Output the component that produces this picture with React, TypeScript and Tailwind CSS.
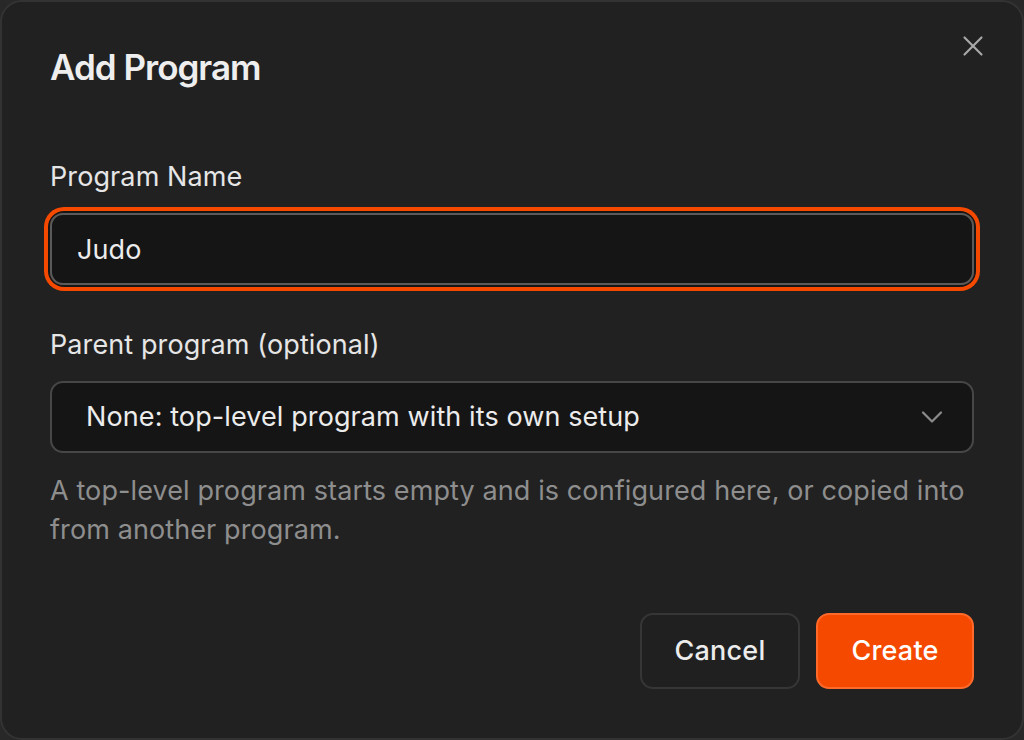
import React, { useState } from 'react';
import { X, ChevronDown } from 'lucide-react';

const App = () => {
  const [name, setName] = useState('Judo');

  return (
    <div className="min-h-screen w-full bg-[#282828]" style={{ fontFamily: 'Inter, "Noto Sans", sans-serif' }}>
      <div className="relative h-[740px] w-[1024px] rounded-[22px] border-2 border-[#333333] bg-[#212121] px-[48px] pt-[41px] text-[#ececec]">
        <button className="absolute right-[32px] top-[27px] text-[#a8a8a8]">
          <X className="h-[34px] w-[34px]" strokeWidth={1.5} />
        </button>

        <h1 className="text-[35px] font-semibold leading-[48px] tracking-[-1px] text-[#eeeeee]">Add Program</h1>

        <div className="mt-[68px]">
          <label className="block text-[27px] leading-[36px] tracking-[0.1px] text-[#e6e6e6]">Program Name</label>
          <div className="mt-[18px] rounded-[14px] shadow-[0_0_0_2px_#161616,0_0_0_6px_#f54900]">
            <input
              value={name}
              onChange={(e) => setName(e.target.value)}
              className="h-[72px] w-full rounded-[13px] border-2 border-[#5a5a5a] bg-[#151515] px-[25px] text-[27px] tracking-[0.1px] text-[#ececec] outline-none"
            />
          </div>
        </div>

        <div className="mt-[42px]">
          <label className="block text-[27px] leading-[36px] tracking-[0.1px] text-[#e6e6e6]">Parent program (optional)</label>
          <div className="mt-[18px] flex h-[72px] items-center justify-between rounded-[13px] border-2 border-[#474747] bg-[#151515] pl-[34px] pr-[22px]">
            <span className="text-[27px] tracking-[0.1px] text-[#ececec]">None: top-level program with its own setup</span>
            <ChevronDown className="h-[36px] w-[36px] text-[#8a8a8a]" strokeWidth={1.5} />
          </div>
          <p className="mt-[18px] text-[27px] leading-[39px] tracking-[0.1px] text-[#8e8e8e]">
            A top-level program starts empty and is configured here, or copied into from another program.
          </p>
        </div>

        <div className="mt-[64px] flex justify-end gap-[16px]">
          <button className="h-[76px] w-[160px] rounded-[13px] border-2 border-[#363636] bg-[#202020] text-[27px] font-medium tracking-[0.2px] text-[#ececec]">
            Cancel
          </button>
          <button className="h-[76px] w-[158px] rounded-[13px] border-2 border-[#ff6a2a] bg-[#f54900] text-[27px] font-medium tracking-[0.2px] text-white">
            Create
          </button>
        </div>
      </div>
    </div>
  );
};

export default App;
